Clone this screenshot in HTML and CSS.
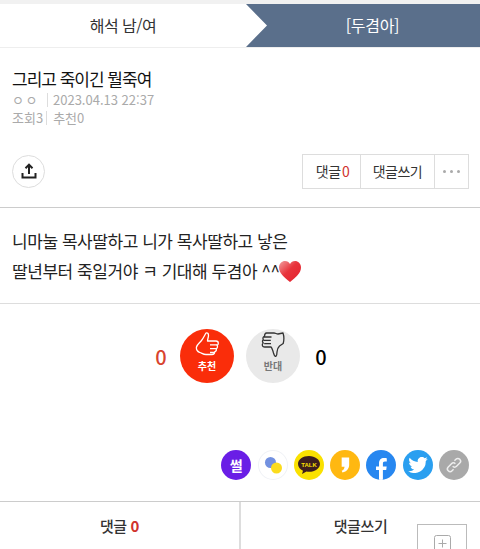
FILE: index.html
```html
<!DOCTYPE html>
<html lang="ko">
<head>
    <meta charset="UTF-8">
    <meta name="viewport" content="width=device-width, initial-scale=1.0">
    <title>두겸아</title>
    <link rel="stylesheet" href="styles.css">
</head>
<body>
    <nav class="tabs">
        <a class="tab-prev">해석 남/여</a>
        <a class="tab-next">
            <svg class="tab-arrow" width="21" height="43" viewBox="0 0 21 43"><path d="M0 0H21V43H0L21 21.5Z" fill="#5a6f8b"/></svg>
            <span class="tab-next-text">[두겸아]</span>
        </a>
    </nav>

    <section class="post-head">
        <h1 class="post-title">그리고 죽이긴 뭘죽여</h1>
        <div class="post-meta"><span class="nick">ㅇㅇ</span><i class="sep"></i>2023.04.13 22:37</div>
        <div class="post-meta"><span>조회3</span><i class="sep sep-tight"></i><span>추천0</span></div>
    </section>

    <div class="post-tools">
        <button class="share-btn">
            <svg width="18" height="18" viewBox="0 0 18 18" fill="none" stroke="#222" stroke-width="2"><path d="M9 12V3M5.500 6.200L9 2.700l3.500 3.500"/><path d="M2.500 11v4.500h13V11"/></svg>
        </button>
        <div class="tool-group">
            <a class="tool tool-count">댓글 <b class="red">0</b></a>
            <a class="tool tool-write">댓글쓰기</a>
            <a class="tool tool-more"><i></i><i></i><i></i></a>
        </div>
    </div>

    <article class="post-body">
        <p>니마눌 목사딸하고 니가 목사딸하고 낳은</p>
        <p>딸년부터 죽일거야 ㅋ 기대해 두겸아 ^^<svg class="heart" width="24" height="23" viewBox="0 0 24 23"><defs><linearGradient id="hg" x1="0" y1="0" x2="1" y2="1"><stop offset="0" stop-color="#f2a0a0"/><stop offset=".45" stop-color="#e8343c"/><stop offset="1" stop-color="#e3202c"/></linearGradient></defs><path d="M12 22C6 17 1 13 1 7.500 1 3.500 4 1 7 1c2.200 0 4 1.200 5 3 1-1.800 2.800-3 5-3 3 0 6 2.500 6 6.500C23 13 18 17 12 22Z" fill="url(#hg)"/></svg></p>
    </article>

    <section class="votes">
        <span class="vote-num red-num">0</span>
        <button class="vote-btn vote-up">
            <svg width="24" height="25" viewBox="0 0 24 25" fill="none" stroke="#fff" stroke-width="1.300" stroke-linejoin="round"><path d="M11 1c1.500-.5 2.500.5 2.500 2.500 0 2-1 3.500-1 5.500H21c1.500 0 2.300 1 2.300 2.200 0 1-.5 1.800-1.300 2 .8 1 .6 3-.8 3.600.5 1.200-.2 2.700-1.500 3 0 1.700-1.200 2.700-2.700 2.700H11c-3 0-4-1.500-6.500-2.200C2.500 19.700 1 17.500 1.500 15c.5-2.500 3-4 5-6.500 2-2.500 3-5 4.500-7.500Z"/><path d="M15 12.800h7M15 16.600h6.200M15 20.500h5"/></svg>
            <span>추천</span>
        </button>
        <button class="vote-btn vote-down">
            <svg width="24" height="25" viewBox="0 0 24 25" fill="none" stroke="#333" stroke-width="1.300" stroke-linejoin="round"><path d="M5.500 1H13c1.500 0 2.500 1 4 1l5-1c1 3 1 7.500.2 10.500l-3.700 2.500c-1.500 1.500-2.500 3.500-2.500 6 0 2 0 3.500-1.200 4.500-1.500 0-1.800-2-2.300-3.500-.7-2.500-1.500-5-2.500-6H3.800c-1.500 0-2.500-.8-2.500-2.200 0-.8.300-1.500 1-1.800-1-1-1.200-2.500 0-3.300-.8-1.500 0-3 1.200-3.300C3.500 2 4.300 1 5.500 1Z"/><path d="M2.800 5h7.700M2.300 8.300h7.500M3.200 11.700h6.800"/></svg>
            <span>반대</span>
        </button>
        <span class="vote-num vote-num-right">0</span>
    </section>

    <div class="share-row">
        <a class="sns sns-ssul">썰</a>
        <a class="sns sns-band">
            <svg width="26" height="26" viewBox="0 0 26 26"><circle cx="10.500" cy="10.500" r="5.500" fill="#7391e0"/><circle cx="16.500" cy="16" r="5.500" fill="#fbdc1e"/></svg>
        </a>
        <a class="sns sns-talk">
            <svg width="24" height="20" viewBox="0 0 24 20"><path d="M12 1C5.900 1 1 4.500 1 9c0 2.900 2 5.300 5 6.700L5 19l4.500-2.400c.8.100 1.600.2 2.500.2 6.100 0 11-3.500 11-7.800S18.100 1 12 1Z" fill="#3c1e1e"/><text x="12" y="11.500" class="talk-text">TALK</text></svg>
        </a>
        <a class="sns sns-quote">
            <svg width="10" height="18" viewBox="0 0 12 20"><path d="M2 1h9v9c0 4-3 8-8 9l-1-2c2-1 3-2 3.500-5H2Z" fill="#fff"/></svg>
        </a>
        <a class="sns sns-fb">
            <svg width="11" height="23" viewBox="0 0 11 23"><path d="M3 23V13H0V9.500h3V6.500C3 2.800 5 1 8 1c1.300 0 2.400.1 2.800.2v3.300H9c-1.600 0-2.100.8-2.100 2v3h3.800l-.5 3.500H6.900V23Z" fill="#fff"/></svg>
        </a>
        <a class="sns sns-tw">
            <svg width="20" height="16" viewBox="0 0 22 18"><path d="M22 2.100c-.8.400-1.700.6-2.600.7.900-.6 1.600-1.400 2-2.500-.9.500-1.900.9-2.900 1.100A4.500 4.500 0 0 0 10.800 5.600C7.100 5.400 3.800 3.600 1.600.9c-1.200 2-.6 4.700 1.400 6-.7 0-1.400-.2-2-.6 0 2.200 1.500 4.100 3.600 4.500-.7.200-1.400.2-2 .1.600 1.800 2.200 3.100 4.200 3.100A9 9 0 0 1 0 15.900 12.800 12.800 0 0 0 19.700 4.500c.9-.6 1.700-1.400 2.300-2.400Z" fill="#fff"/></svg>
        </a>
        <a class="sns sns-link">
            <svg width="18" height="18" viewBox="0 0 20 20" fill="none" stroke="#eee" stroke-width="1.600"><path d="M8.500 11.500a3 3 0 0 0 4.300 0l3.600-3.600a3 3 0 0 0-4.300-4.300L10.500 5.200"/><path d="M11.500 8.500a3 3 0 0 0-4.300 0l-3.600 3.600a3 3 0 0 0 4.300 4.300l1.600-1.600"/></svg>
        </a>
    </div>

    <footer class="bottom-bar">
        <a class="bottom-link">댓글 <b class="red red-strong">0</b></a>
        <a class="bottom-link">댓글쓰기</a>
    </footer>

    <div class="float-box">
        <svg class="float-plus" width="17" height="17" viewBox="0 0 17 17" fill="none" stroke="#aaa"><rect x=".5" y=".5" width="16" height="16" rx="2"/><path d="M8.500 4.500v8M4.500 8.500h8"/></svg>
    </div>
</body>
</html>
```

FILE: styles.css
```css
html, body {
    height: 549px;
    overflow: hidden;
}
body {
    font-family: "Noto Sans CJK KR", "Noto Sans", sans-serif;
    margin: 0;
    padding: 0;
    position: relative;
    background-color: #fff;
    color: #222;
}
p, h1 {
    margin: 0;
}
button {
    padding: 0;
    font-family: inherit;
}

.tabs {
    display: flex;
    height: 43px;
    border-top: 4px solid #f1f1f1;
    border-bottom: 1px solid #eee;
}
.tab-prev {
    width: 246px;
    font-size: 16px;
    letter-spacing: -0.5px;
    line-height: 43px;
    text-align: center;
    color: #333;
}
.tab-next {
    flex: 1;
    display: flex;
}
.tab-next-text {
    flex: 1;
    background-color: #5a6f8b;
    color: #fff;
    font-size: 16px;
    letter-spacing: -0.3px;
    line-height: 43px;
    text-align: center;
    padding-right: 2px;
}

.post-head {
    padding: 19px 12px 0;
}
.post-title {
    font-size: 17px;
    font-weight: 400;
    letter-spacing: -1px;
    line-height: 24px;
    color: #111;
}
.post-meta {
    font-size: 13px;
    line-height: 18px;
    height: 18px;
    color: #aaa;
    display: flex;
    align-items: center;
}
.nick {
    width: 35px;
    letter-spacing: 1.500px;
}
.sep {
    width: 1px;
    height: 14px;
    background-color: #ddd;
    margin-right: 5px;
}
.sep-tight {
    margin: 0 6px 0 3px;
}

.post-tools {
    display: flex;
    justify-content: space-between;
    align-items: center;
    padding: 26px 11px 0 12px;
    height: 36px;
}
.share-btn {
    width: 33px;
    height: 33px;
    border: 1px solid #ddd;
    border-radius: 50%;
    background-color: #fff;
    display: flex;
    align-items: center;
    justify-content: center;
}
.tool-group {
    display: flex;
    height: 33px;
    border: 1px solid #ddd;
}
.tool {
    font-size: 14px;
    letter-spacing: -0.5px;
    line-height: 33px;
    text-align: center;
    color: #333;
    border-right: 1px solid #ddd;
}
.tool-count {
    width: 58px;
    word-spacing: -2px;
    padding-left: 2px;
    box-sizing: border-box;
}
.tool-write {
    width: 73px;
}
.tool-more {
    width: 33px;
    border-right: none;
    display: flex;
    align-items: center;
    justify-content: center;
    gap: 4px;
}
.tool-more i {
    width: 3px;
    height: 3px;
    border-radius: 50%;
    background-color: #aaa;
}
.red {
    color: #d0312d;
    font-weight: 400;
}
.red-strong {
    font-weight: 700;
}

.post-body {
    margin-top: 18px;
    padding: 18px 12px 0;
    height: 77px;
    border-top: 1px solid #ccc;
    border-bottom: 1px solid #ddd;
    font-size: 17px;
    letter-spacing: -0.45px;
    line-height: 30px;
    color: #222;
}
.heart {
    vertical-align: -5px;
    margin-left: -1px;
}

.votes {
    display: flex;
    align-items: center;
    justify-content: center;
    gap: 12px;
    padding-top: 25px;
}
.vote-num {
    font-size: 20px;
    font-weight: 500;
    color: #000;
    width: 14px;
    text-align: center;
}
.vote-num-right {
    margin-left: 2px;
    margin-right: -2px;
}
.red-num {
    color: #d8432f;
}
.vote-btn {
    width: 54px;
    height: 54px;
    border: none;
    border-radius: 50%;
    display: flex;
    flex-direction: column;
    align-items: center;
    font-size: 10px;
    font-weight: 700;
    line-height: 12px;
    padding-top: 3px;
}
.vote-btn span {
    margin-top: 3px;
}
.vote-up {
    background-color: #fa2d0a;
    color: #fff;
}
.vote-down {
    background-color: #e9e9e9;
    color: #777;
}

.share-row {
    display: flex;
    justify-content: flex-end;
    gap: 6.300px;
    padding: 67px 11px 0 0;
}
.sns {
    width: 30px;
    height: 30px;
    border-radius: 50%;
    display: flex;
    align-items: center;
    justify-content: center;
    color: #fff;
    font-size: 14px;
    font-weight: 700;
    overflow: hidden;
}
.sns-ssul {
    background-color: #6a1ee6;
}
.sns-band {
    background-color: #fff;
    box-shadow: 0 0 0 1px #f0f2f6 inset;
}
.sns-talk {
    background-color: #fae100;
}
.talk-text {
    font-family: "Liberation Sans", sans-serif;
    font-size: 6px;
    font-weight: 700;
    fill: #fae100;
    text-anchor: middle;
}
.sns-quote {
    background-color: #ffb811;
}
.sns-fb {
    background-color: #2787f0;
    align-items: flex-end;
}
.sns-tw {
    background-color: #2a9ff0;
}
.sns-link {
    background-color: #a9a9a9;
}

.bottom-bar {
    display: flex;
    height: 48px;
    margin-top: 21px;
    border-top: 1px solid #ccc;
}
.bottom-link {
    flex: 1;
    font-size: 15px;
    font-weight: 500;
    letter-spacing: -0.4px;
    line-height: 48px;
    text-align: center;
    color: #333;
}
.bottom-link:first-child {
    border-right: 2px solid #ddd;
}

.float-box {
    position: absolute;
    left: 417px;
    top: 524px;
    width: 48px;
    height: 48px;
    border: 1px solid #bbb;
    background-color: rgba(255, 255, 255, 0.9);
    display: flex;
    justify-content: center;
}
.float-plus {
    margin-top: 10px;
}
```
